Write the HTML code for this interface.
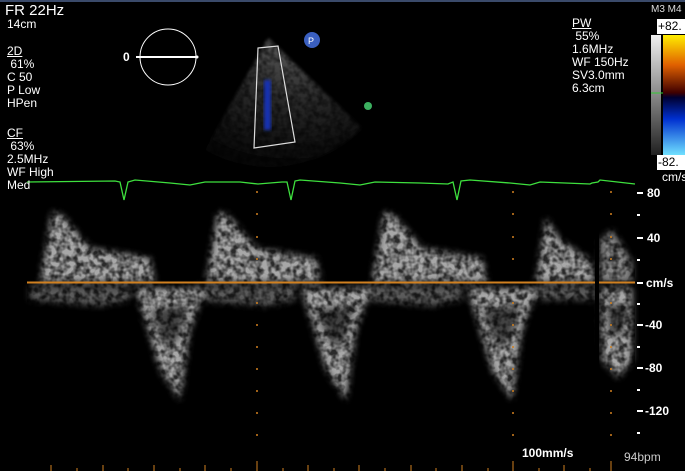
<!DOCTYPE html>
<html><head><style>
html,body{margin:0;padding:0;background:#000;width:685px;height:471px;overflow:hidden}
body{position:relative;font-family:"Liberation Sans",sans-serif;color:#fff}
.t{position:absolute;font-size:12px;line-height:13px;white-space:pre}
u{text-decoration:underline}
</style></head><body>
<svg width="685" height="471" style="position:absolute;left:0;top:0">
<defs>
<filter id="b" x="-20%" y="-20%" width="140%" height="140%"><feGaussianBlur stdDeviation="3.5"/></filter>
<filter id="b2"><feGaussianBlur stdDeviation="1.5"/></filter>
<filter id="n" x="0" y="0" width="100%" height="100%">
<feTurbulence type="fractalNoise" baseFrequency="0.16" numOctaves="2" seed="3"/>
<feColorMatrix type="matrix" values="0 0 0 0 0  0 0 0 0 0  0 0 0 0 0  2.6 0 0 0 -0.9"/>
<feComposite in2="SourceGraphic" operator="in"/>
</filter>
<linearGradient id="cb" x1="0" y1="0" x2="0" y2="1">
<stop offset="0" stop-color="#ffee00"/><stop offset=".25" stop-color="#e06000"/><stop offset=".48" stop-color="#400000"/>
<stop offset=".52" stop-color="#000030"/><stop offset=".7" stop-color="#0030d0"/><stop offset="1" stop-color="#70e0ff"/></linearGradient>
<linearGradient id="gb" x1="0" y1="0" x2="0" y2="1"><stop offset="0" stop-color="#f0f0f0"/><stop offset="1" stop-color="#202020"/></linearGradient>
<radialGradient id="sec" cx="0.55" cy="0" r="1"><stop offset="0" stop-color="#999"/><stop offset=".5" stop-color="#444"/><stop offset="1" stop-color="#0a0a0a"/></radialGradient>
</defs>
<rect x="0" y="0" width="685" height="2" fill="#3a4a6a"/>
<path d="M268,38 L362,128 A130,130 0 0 1 205,150 Z" fill="url(#sec)" opacity=".6" filter="url(#b2)"/>
<rect x="200" y="36" width="170" height="130" fill="#000" filter="url(#n)" opacity=".5"/>
<path d="M258,48 L278,46 L295,142 L254,148 Z" fill="none" stroke="#ddd" stroke-width="1.2"/>
<g fill="#1830b0" filter="url(#b2)"><rect x="264" y="80" width="7" height="50"/></g>
<circle cx="312" cy="40" r="8" fill="#3a5fc0"/><text x="308" y="44" font-size="9" fill="#fff" font-family="Liberation Sans">P</text>
<circle cx="368" cy="106" r="4" fill="#3cb060"/>
<circle cx="168" cy="57" r="28" fill="none" stroke="#fff" stroke-width="1"/>
<line x1="136" y1="57" x2="196" y2="57" stroke="#fff" stroke-width="2"/><circle cx="197" cy="57" r="1.5" fill="#fff"/>
<rect x="651" y="35" width="10" height="120" fill="url(#gb)"/>
<rect x="663" y="35" width="22" height="120" fill="url(#cb)"/>
<line x1="651" y1="93" x2="663" y2="93" stroke="#3c3" stroke-width="1"/>
<rect x="657" y="19" width="28" height="15" fill="#fff"/><rect x="657" y="155" width="28" height="15" fill="#fff"/>
<g filter="url(#b)" fill="#a8a8a8">
<g id="w">
<path d="M40,282 L52,212 L62,215 L90,248 L150,258 L155,282 Z"/>
<path d="M30,286 L130,286 L130,300 L100,306 L30,300 Z" opacity=".55"/>
<path d="M135,288 L205,288 L190,330 L180,400 L160,370 L148,330 Z"/>
</g>
<use href="#w" x="166"/><use href="#w" x="332"/>
<path d="M536,282 L546,218 L560,240 L590,260 L595,282 Z"/>
<path d="M530,286 L595,286 L595,300 L530,300 Z" opacity=".55"/>
<path d="M600,240 L612,230 L632,262 L632,282 L600,282 Z" opacity=".8"/>
<path d="M600,288 L632,288 L632,360 L618,378 L602,360 Z"/>
</g>
<g filter="url(#b)" fill="#000" opacity=".6">
<g id="h"><path d="M150,310 L188,305 L178,340 L165,345 Z"/></g>
<use href="#h" x="166"/><use href="#h" x="332"/>
<path d="M606,305 L628,305 L622,335 L610,335 Z"/>
</g>
<rect x="27" y="190" width="608" height="260" fill="#000" filter="url(#n)" opacity=".75"/>
<rect x="595" y="178" width="4" height="270" fill="#000"/>
<line x1="27" y1="282.5" x2="595" y2="282.5" stroke="#d08020" stroke-width="2"/>
<line x1="599" y1="282.5" x2="635" y2="282.5" stroke="#d08020" stroke-width="2"/>
<polyline fill="none" stroke="#3ee03e" stroke-width="1.3" points="27,182 115,181 120,182 124,200 128,182 135,180 170,183 190,185 205,182 240,182 258,184 282,182 287,182 291,200 295,181 300,180 340,183 360,185 375,182 420,183 448,184 453,182 457,200 461,181 470,180 510,183 530,185 540,182 590,184 592,183 598,182 600,180 635,184"/>
<g fill="#d08020">
<g id="d"><circle cx="257" cy="192" r="1"/><circle cx="257" cy="214" r="1"/><circle cx="257" cy="237" r="1"/><circle cx="257" cy="259" r="1"/><circle cx="257" cy="303" r="1"/><circle cx="257" cy="325" r="1"/><circle cx="257" cy="347" r="1"/><circle cx="257" cy="369" r="1"/><circle cx="257" cy="391" r="1"/><circle cx="257" cy="413" r="1"/><circle cx="257" cy="435" r="1"/></g>
<use href="#d" x="256"/><use href="#d" x="354"/>
</g>
<g stroke="#d08020" stroke-width="1">
<line x1="51" y1="465" x2="51" y2="471"/><line x1="77" y1="468" x2="77" y2="471"/><line x1="103" y1="465" x2="103" y2="471"/><line x1="128" y1="468" x2="128" y2="471"/><line x1="154" y1="465" x2="154" y2="471"/><line x1="180" y1="468" x2="180" y2="471"/><line x1="205" y1="465" x2="205" y2="471"/><line x1="231" y1="468" x2="231" y2="471"/><line x1="257" y1="461" x2="257" y2="471"/><line x1="283" y1="468" x2="283" y2="471"/><line x1="308" y1="465" x2="308" y2="471"/><line x1="334" y1="468" x2="334" y2="471"/><line x1="359" y1="465" x2="359" y2="471"/><line x1="385" y1="468" x2="385" y2="471"/><line x1="411" y1="465" x2="411" y2="471"/><line x1="436" y1="468" x2="436" y2="471"/><line x1="462" y1="465" x2="462" y2="471"/><line x1="488" y1="468" x2="488" y2="471"/><line x1="513" y1="461" x2="513" y2="471"/><line x1="539" y1="468" x2="539" y2="471"/><line x1="564" y1="465" x2="564" y2="471"/><line x1="590" y1="468" x2="590" y2="471"/><line x1="611" y1="461" x2="611" y2="471"/>
</g>
<g stroke="#fff" stroke-width="2">
<line x1="637" y1="193" x2="643" y2="193"/><line x1="637" y1="215" x2="640" y2="215"/><line x1="637" y1="238" x2="643" y2="238"/><line x1="637" y1="260" x2="640" y2="260"/><line x1="637" y1="283" x2="643" y2="283"/><line x1="637" y1="304" x2="640" y2="304"/><line x1="637" y1="325" x2="643" y2="325"/><line x1="637" y1="347" x2="640" y2="347"/><line x1="637" y1="368" x2="643" y2="368"/><line x1="637" y1="390" x2="640" y2="390"/><line x1="637" y1="411" x2="643" y2="411"/><line x1="637" y1="433" x2="640" y2="433"/>
</g>
</svg>
<div class="t" style="left:5px;top:3px;font-size:15px;line-height:15px">FR 22Hz</div>
<div class="t" style="left:7px;top:18px">14cm</div>
<div class="t" style="left:7px;top:45px"><u>2D</u>
 61%
C 50
P Low
HPen</div>
<div class="t" style="left:7px;top:127px"><u>CF</u>
 63%
2.5MHz
WF High
Med</div>
<div class="t" style="left:123px;top:51px;font-weight:bold">0</div>
<div class="t" style="left:572px;top:17px"><u>PW</u>
 55%
1.6MHz
WF 150Hz
SV3.0mm
6.3cm</div>
<div class="t" style="left:651px;top:3px;font-size:10px;color:#ddd">M3 M4</div>
<div class="t" style="left:658px;top:20px;color:#000">+82.</div>
<div class="t" style="left:658px;top:156px;color:#000">-82.</div>
<div class="t" style="left:662px;top:171px">cm/s</div>
<div class="t" style="left:647px;top:187px;font-weight:bold">80</div>
<div class="t" style="left:647px;top:232px;font-weight:bold">40</div>
<div class="t" style="left:646px;top:277px;font-weight:bold">cm/s</div>
<div class="t" style="left:645px;top:319px;font-weight:bold">-40</div>
<div class="t" style="left:645px;top:362px;font-weight:bold">-80</div>
<div class="t" style="left:645px;top:405px;font-weight:bold">-120</div>
<div class="t" style="left:522px;top:447px;font-weight:bold">100mm/s</div>
<div class="t" style="left:624px;top:451px;color:#ccc">94bpm</div>
</body></html>
